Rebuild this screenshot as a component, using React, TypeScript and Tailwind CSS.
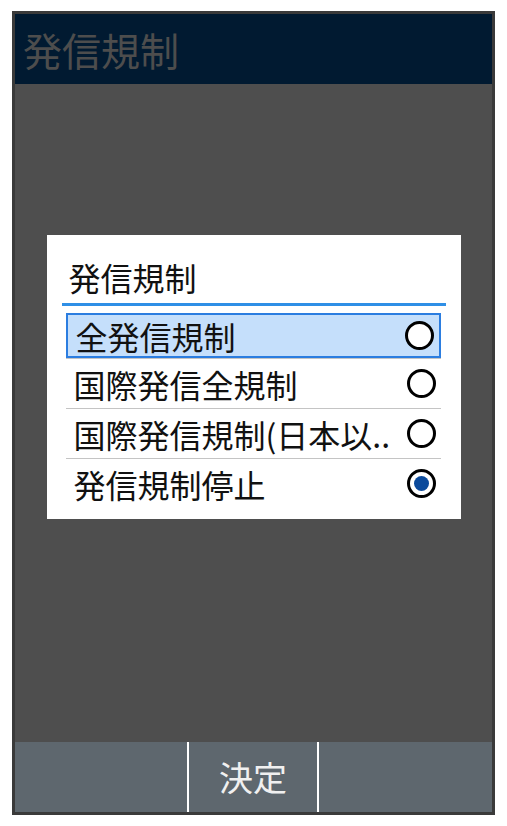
const options = [
  { label: '全発信規制', checked: false },
  { label: '国際発信全規制', checked: false },
  { label: '国際発信規制(日本以..', checked: false },
  { label: '発信規制停止', checked: true },
];

const Radio = ({ checked }: { checked: boolean }) => (
  <div className="w-[29px] h-[29px] rounded-full border-[3px] border-black bg-white flex items-center justify-center shrink-0">
    {checked && <div className="w-[15px] h-[15px] rounded-full bg-[#0b4a9c]" />}
  </div>
);

export default function App() {
  return (
    <div
      className="w-[507px] h-[826px] bg-white pt-[11px] pl-[12px]"
      style={{ fontFamily: '"Noto Sans CJK JP", "Noto Sans", sans-serif' }}
    >
      <div className="w-[483px] h-[804px] border-[3.5px] border-[#3a3a3a] bg-[#4e4e4e] flex flex-col">
        {/* Header */}
        <div className="h-[70px] bg-[#011a31] flex items-center pl-[8px] shrink-0">
          <span className="text-[39px] leading-none text-[#4d4d4d]">発信規制</span>
        </div>

        {/* Body */}
        <div className="flex-1 pt-[151px]">
          <div className="mx-auto w-[414px] bg-white pt-[24px] pb-[11px]">
            <div className="pl-[22px] text-[32px] leading-[37px] text-[#111]">発信規制</div>
            <div className="mt-[7px] mx-[15px] h-[3px] bg-[#2f8fe6]" />
            <div className="mt-[7px] ml-[19px] mr-[20px]">
              {options.map((o, i) => (
                <div
                  key={o.label}
                  className={i === options.length - 1 ? '' : 'border-b border-[#c4c4c4]'}
                >
                  <div
                    className={`flex items-center justify-between pl-[8px] pr-[5px] ${
                      i === 0
                        ? 'h-[45px] bg-[#c5dffb] border-2 border-[#2b7de0]'
                        : 'h-[49px]'
                    }`}
                  >
                    <span className="text-[32px] leading-none text-[#111] whitespace-nowrap">
                      {o.label}
                    </span>
                    <Radio checked={o.checked} />
                  </div>
                </div>
              ))}
            </div>
          </div>
        </div>

        {/* Bottom bar */}
        <div className="h-[70px] bg-[#5e676e] flex shrink-0">
          <div className="w-[172px]" />
          <div className="w-[2px] bg-white" />
          <div className="w-[128px] flex items-center justify-center">
            <span className="text-[34px] leading-none text-[#f0f0f0]">決定</span>
          </div>
          <div className="w-[2px] bg-white" />
          <div className="flex-1" />
        </div>
      </div>
    </div>
  );
}
